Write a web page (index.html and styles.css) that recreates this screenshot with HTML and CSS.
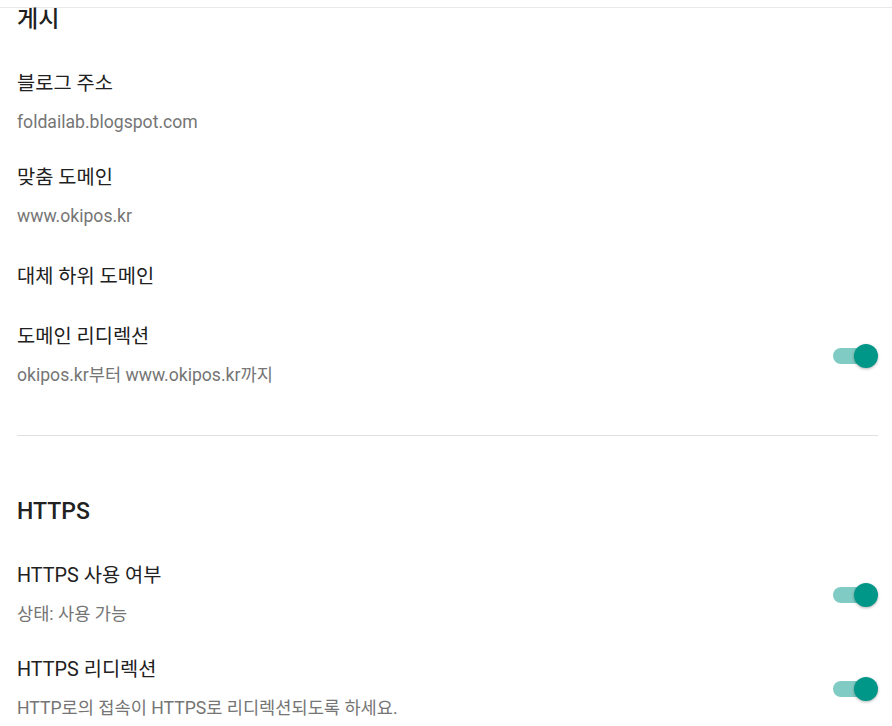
FILE: index.html
```html
<!DOCTYPE html>
<html lang="ko">
<head>
  <meta charset="UTF-8" />
  <meta name="viewport" content="width=device-width, initial-scale=1.0" />
  <title>설정</title>
  <link rel="stylesheet" href="styles.css">
</head>
<body>
  <div class="topbar"></div>

  <main class="settings">
    <section class="section">
      <h2 class="section-title">게시</h2>

      <div class="setting">
        <div class="setting-text">
          <div class="setting-name">블로그 주소</div>
          <div class="setting-value">foldailab.blogspot.com</div>
        </div>
      </div>

      <div class="setting">
        <div class="setting-text">
          <div class="setting-name">맞춤 도메인</div>
          <div class="setting-value">www.okipos.kr</div>
        </div>
      </div>

      <div class="setting">
        <div class="setting-text">
          <div class="setting-name">대체 하위 도메인</div>
        </div>
      </div>

      <div class="setting">
        <div class="setting-text">
          <div class="setting-name">도메인 리디렉션</div>
          <div class="setting-value">okipos.kr부터 www.okipos.kr까지</div>
        </div>
        <div class="toggle on"><span class="track"></span><span class="thumb"></span></div>
      </div>
    </section>

    <hr class="divider">

    <section class="section">
      <h2 class="section-title spaced">HTTPS</h2>

      <div class="setting">
        <div class="setting-text">
          <div class="setting-name">HTTPS 사용 여부</div>
          <div class="setting-value">상태: 사용 가능</div>
        </div>
        <div class="toggle on"><span class="track"></span><span class="thumb"></span></div>
      </div>

      <div class="setting">
        <div class="setting-text">
          <div class="setting-name">HTTPS 리디렉션</div>
          <div class="setting-value">HTTP로의 접속이 HTTPS로 리디렉션되도록 하세요.</div>
        </div>
        <div class="toggle on"><span class="track"></span><span class="thumb"></span></div>
      </div>
    </section>
  </main>
</body>
</html>
```

FILE: styles.css
```css
* {
  box-sizing: border-box;
}
body {
  font-family: Roboto, "Noto Sans CJK KR", sans-serif;
  margin: 0;
  background-color: #fff;
  color: #212121;
}
.topbar {
  height: 8px;
  border-bottom: 1px solid #e8e8e8;
}
.settings {
  padding: 0 14px 0 17px;
}
.section-title {
  margin: 0 0 24px;
  font-size: 23px;
  line-height: 24px;
  font-weight: 500;
  color: #212121;
}
.section-title.spaced {
  margin-top: 64px;
}
.setting {
  display: flex;
  align-items: center;
  justify-content: space-between;
  padding: 16px 0;
  min-height: 65px;
}
.setting-name {
  font-size: 19.8px;
  line-height: 24px;
  color: #212121;
}
.setting-value {
  margin-top: 14px;
  font-size: 17.6px;
  line-height: 24px;
  color: #757575;
}
.divider {
  margin: 32px 0 0;
  border: none;
  border-top: 1px solid #e0e0e0;
}
.toggle {
  position: relative;
  width: 45px;
  height: 24px;
  flex-shrink: 0;
}
.toggle .track {
  position: absolute;
  left: 0;
  top: 4px;
  width: 36px;
  height: 16px;
  border-radius: 8px;
  background-color: #80cbc4;
}
.toggle .thumb {
  position: absolute;
  right: 0;
  top: 0;
  width: 24px;
  height: 24px;
  border-radius: 50%;
  background-color: #009688;
  box-shadow: 0 1px 3px rgba(0,0,0,0.3);
}
```
